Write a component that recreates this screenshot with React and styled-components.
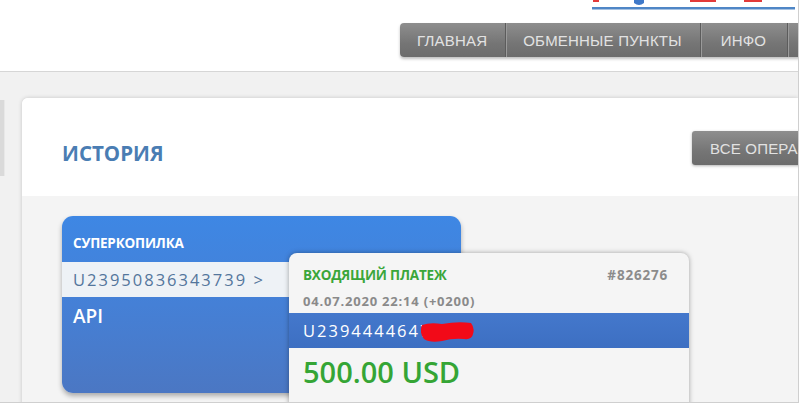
import React from 'react'
import styled, { createGlobalStyle } from 'styled-components'

const Global = createGlobalStyle`
    html, body {
        margin: 0;
        padding: 0;
        background: #ffffff;
    }
    body {
        font-family: "Open Sans", "Liberation Sans", sans-serif;
    }
`

const Frame = styled.div`
    position: relative;
    width: 798px;
    height: 402px;
    border-right: 1px solid #cfcfcf;
    border-bottom: 1px solid #cfcfcf;
    overflow: hidden;
    background: #f1f1f1;
`

const Header = styled.div`
    height: 71px;
    background: #ffffff;
    border-bottom: 1px solid #d6d6d6;
    display: flex;
    flex-direction: column;
`

const LogoStrip = styled.svg`
    display: block;
    flex-shrink: 0;
    margin-left: 592px;
`

const Nav = styled.div`
    display: flex;
    margin-top: 13px;
    margin-left: 400px;
    height: 34px;
    white-space: nowrap;
    box-shadow: 0 2px 3px rgba(0, 0, 0, 0.25);
    border-radius: 4px 0 0 4px;
    width: max-content;
`

const Tab = styled.div`
    display: flex;
    align-items: center;
    padding: 0 18px 0 17px;
    font-family: "Liberation Sans", Arial, sans-serif;
    font-size: 15px;
    letter-spacing: 0.2px;
    color: #e2e2e2;
    text-transform: uppercase;
    background: linear-gradient(#8e8e8e, #757575 60%, #6c6c6c);
    border-right: 1px solid #5c5c5c;
    box-shadow: inset 1px 0 0 #9a9a9a;
    ${p => p.first ? `border-radius: 4px 0 0 4px; box-shadow: none; padding-right: 18px;` : ``}
    ${p => p.wide ? `padding: 0 21px 0 20px;` : ``}
`

const Body = styled.div`
    display: flex;
    padding-top: 26px;
`

const SideStub = styled.div`
    flex-shrink: 0;
    width: 4px;
    height: 76px;
    margin-top: 2px;
    background: #dadada;
    border-right: 1px solid #e8e8e8;
`

const Card = styled.div`
    margin-left: 17px;
    flex: 1;
    min-width: 0;
    display: flex;
    flex-direction: column;
    background: #ffffff;
    border-radius: 6px 0 0 0;
    box-shadow: 0 0 4px rgba(0, 0, 0, 0.18);
`

const CardHead = styled.div`
    flex-shrink: 0;
    height: 98px;
    display: grid;
    grid-template-columns: 630px auto;
    padding-left: 40px;
    background: #ffffff;
    border-radius: 6px 0 0 0;
`

const Title = styled.div`
    margin-top: 43px;
    font-size: 20.5px;
    line-height: 24px;
    font-weight: 700;
    color: #4a7db3;
    text-transform: uppercase;
`

const GrayButton = styled.div`
    margin-top: 33px;
    height: 34px;
    display: flex;
    align-items: center;
    padding: 0 18px;
    font-family: "Liberation Sans", Arial, sans-serif;
    font-size: 15px;
    letter-spacing: 0.2px;
    color: #e2e2e2;
    white-space: nowrap;
    background: linear-gradient(#8e8e8e, #757575 60%, #6c6c6c);
    border-radius: 3px 0 0 3px;
    box-shadow: 0 1px 3px rgba(0, 0, 0, 0.3);
`

const CardBody = styled.div`
    position: relative;
    height: 230px;
    padding: 20px 40px;
    background: #f4f4f4;
`

const Wallet = styled.div`
    width: 399px;
    height: 177px;
    border-radius: 11px;
    background: linear-gradient(#3e87e4, #4580d6 50%, #4b77c3);
    box-shadow: 0 3px 5px rgba(0, 0, 0, 0.3);
    padding-top: 20px;
    box-sizing: border-box;
`

const WalletName = styled.div`
    padding-left: 11px;
    font-size: 13.5px;
    line-height: 14px;
    font-weight: 700;
    letter-spacing: -0.2px;
    color: #ffffff;
    margin-bottom: 12px;
`

const WalletRow = styled.div`
    height: 35px;
    display: flex;
    align-items: center;
    padding-left: 11px;
    background: #eef2f6;
    font-size: 16.5px;
    letter-spacing: 2px;
    color: #54769c;
`

const WalletNote = styled.div`
    margin-top: 8px;
    padding-left: 11px;
    font-size: 19px;
    line-height: 22px;
    font-weight: 600;
    color: #ffffff;
`

const Popup = styled.div`
    position: absolute;
    left: 267px;
    top: 57px;
    width: 400px;
    height: 170px;
    background: #f5f5f5;
    border-radius: 8px 8px 0 0;
    box-shadow: 0 0 5px rgba(0, 0, 0, 0.35);
`

const PopHead = styled.div`
    display: flex;
    justify-content: space-between;
    padding: 14px 21px 0 14px;
    line-height: 16px;
`

const Kind = styled.div`
    font-size: 13.5px;
    font-weight: 700;
    letter-spacing: -0.2px;
    color: #3aa63a;
`

const Number = styled.div`
    font-size: 13.5px;
    font-weight: 700;
    letter-spacing: 0.8px;
    color: #8c8c8c;
`

const Stamp = styled.div`
    margin-top: 10px;
    padding-left: 14px;
    line-height: 16px;
    font-size: 13px;
    font-weight: 700;
    letter-spacing: 0.8px;
    color: #8a8a8a;
`

const AccountBar = styled.div`
    position: relative;
    margin-top: 4px;
    height: 35px;
    display: flex;
    align-items: center;
    padding-left: 14px;
    background: linear-gradient(#4478cc, #3d6fc2);
    font-size: 16.5px;
    letter-spacing: 2px;
    color: #ffffff;
`

const Redact = styled.svg`
    position: absolute;
    left: 132px;
    top: 8px;
`

const Amount = styled.div`
    margin-top: 7px;
    padding-left: 14px;
    font-size: 29px;
    line-height: 34px;
    font-weight: 600;
    color: #35a535;
`

export default function App() {
    return (
        <>
            <Global />
            <Frame>
                <Header>
                    <LogoStrip width="206" height="10" viewBox="0 0 206 10">
                        <rect x="1" y="0" width="6" height="2" fill="#e23a3a" />
                        <rect x="98" y="0" width="26" height="2" fill="#e23a3a" />
                        <rect x="152" y="0" width="18" height="2" fill="#e23a3a" />
                        <path d="M42 0 h10 v3 q-5 4 -10 0 z" fill="#3f79c9" />
                        <rect x="0" y="7" width="203" height="2.5" fill="#4f86c6" />
                    </LogoStrip>
                    <Nav>
                        <Tab first>Главная</Tab>
                        <Tab>Обменные пункты</Tab>
                        <Tab wide>Инфо</Tab>
                        <Tab>Контакты</Tab>
                    </Nav>
                </Header>
                <Body>
                    <SideStub />
                    <Card>
                        <CardHead>
                            <Title>История</Title>
                            <GrayButton>ВСЕ ОПЕРАЦИИ</GrayButton>
                        </CardHead>
                        <CardBody>
                            <Wallet>
                                <WalletName>СУПЕРКОПИЛКА</WalletName>
                                <WalletRow>U23950836343739 &gt;</WalletRow>
                                <WalletNote>API</WalletNote>
                            </Wallet>
                            <Popup>
                                <PopHead>
                                    <Kind>ВХОДЯЩИЙ ПЛАТЕЖ</Kind>
                                    <Number>#826276</Number>
                                </PopHead>
                                <Stamp>04.07.2020 22:14 (+0200)</Stamp>
                                <AccountBar>
                                    U2394444647
                                    <Redact width="54" height="22" viewBox="0 0 54 22">
                                        <path d="M1 4 q8 -3 20 -1 q16 -3 29 -1 q4 5 2 11 q-1 6 -9 5 q-11 -1 -22 2 q-12 2 -18 -2 q-5 -6 -2 -14 z" fill="#f20a18" />
                                    </Redact>
                                </AccountBar>
                                <Amount>500.00 USD</Amount>
                            </Popup>
                        </CardBody>
                    </Card>
                </Body>
            </Frame>
        </>
    )
}
